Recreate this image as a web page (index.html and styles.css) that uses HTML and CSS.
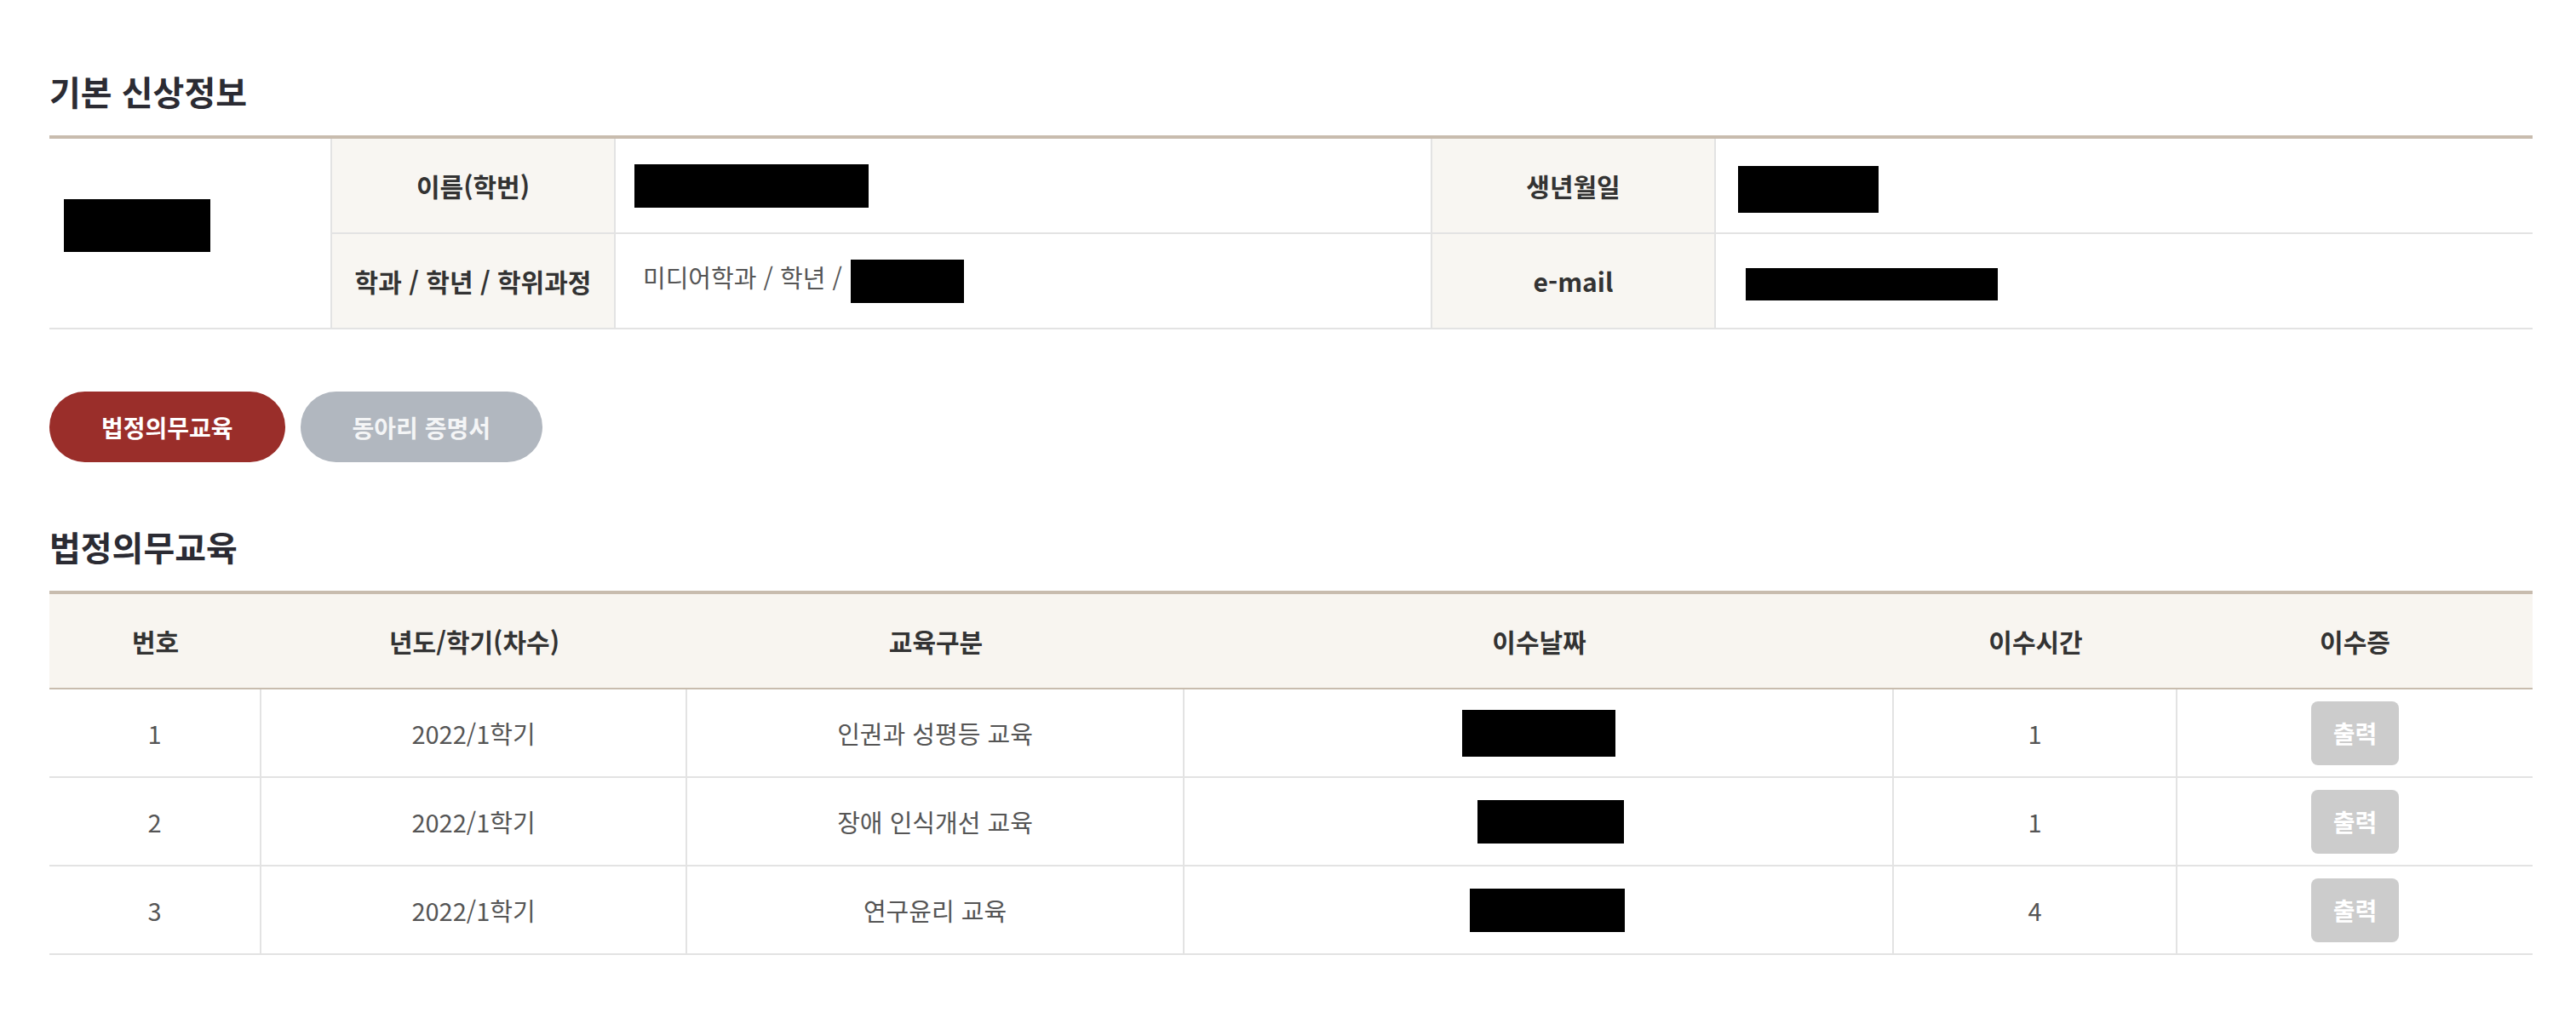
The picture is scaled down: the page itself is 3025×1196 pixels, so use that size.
FILE: index.html
```html
<!DOCTYPE html>
<html lang="ko">
<head>
    <meta charset="UTF-8">
    <meta name="viewport" content="width=device-width, initial-scale=1.0">
    <title>신상정보 - 법정의무교육</title>
    <link rel="stylesheet" href="styles.css">
</head>
<body>
    <div class="container">
        <!-- 기본 신상정보 -->
        <h2 class="section-title">기본 신상정보</h2>
        <table class="info-table">
            <colgroup>
                <col class="col-photo">
                <col class="col-label">
                <col class="col-value-wide">
                <col class="col-label">
                <col class="col-value">
            </colgroup>
            <tr>
                <td rowspan="2" class="photo"><span class="redact redact-photo"></span></td>
                <th>이름(학번)</th>
                <td class="name-cell"><span class="redact redact-name"></span></td>
                <th>생년월일</th>
                <td class="last"><span class="redact redact-birth"></span></td>
            </tr>
            <tr>
                <th>학과 / 학년 / 학위과정</th>
                <td>미디어학과 / 학년 / <span class="redact redact-course"></span></td>
                <th>e-mail</th>
                <td class="last"><span class="redact redact-email"></span></td>
            </tr>
        </table>

        <!-- Tabs -->
        <div class="tabs">
            <button type="button" class="tab active">법정의무교육</button>
            <button type="button" class="tab">동아리 증명서</button>
        </div>

        <!-- 법정의무교육 -->
        <h2 class="section-title">법정의무교육</h2>
        <table class="list-table">
            <colgroup>
                <col class="col-no">
                <col class="col-term">
                <col class="col-type">
                <col class="col-date">
                <col class="col-hours">
                <col class="col-cert">
            </colgroup>
            <thead>
                <tr>
                    <th>번호</th>
                    <th>년도/학기(차수)</th>
                    <th>교육구분</th>
                    <th>이수날짜</th>
                    <th>이수시간</th>
                    <th class="last">이수증</th>
                </tr>
            </thead>
            <tbody>
                <tr>
                    <td>1</td>
                    <td>2022/1학기</td>
                    <td>인권과 성평등 교육</td>
                    <td><span class="redact redact-date"></span></td>
                    <td>1</td>
                    <td class="last"><button type="button" class="btn-print">출력</button></td>
                </tr>
                <tr>
                    <td>2</td>
                    <td>2022/1학기</td>
                    <td>장애 인식개선 교육</td>
                    <td><span class="redact redact-date narrow"></span></td>
                    <td>1</td>
                    <td class="last"><button type="button" class="btn-print">출력</button></td>
                </tr>
                <tr>
                    <td>3</td>
                    <td>2022/1학기</td>
                    <td>연구윤리 교육</td>
                    <td><span class="redact redact-date shift"></span></td>
                    <td>4</td>
                    <td class="last"><button type="button" class="btn-print">출력</button></td>
                </tr>
            </tbody>
        </table>
    </div>
</body>
</html>
```

FILE: styles.css
```css
/* Basic Reset */
* {
    margin: 0;
    padding: 0;
    box-sizing: border-box;
}

body {
    font-family: 'Noto Sans CJK KR', 'Noto Sans', sans-serif;
    background-color: #fff;
    color: #333;
}

.container {
    width: 2916px;
    margin-left: 58px;
    padding-top: 82px;
    padding-bottom: 60px;
}

.section-title {
    font-size: 40px;
    line-height: 50px;
    font-weight: 700;
    color: #2b2b33;
    margin-bottom: 27px;
}

/* shared table look */
table {
    width: 100%;
    table-layout: fixed;
    border-collapse: separate;
    border-spacing: 0;
    border-top: 4px solid #c8bcae;
}

th, td {
    border-bottom: 2px solid #e3e3e3;
    border-right: 2px solid #e3e3e3;
    vertical-align: middle;
}

th.last, td.last {
    border-right: none;
}

.redact {
    display: inline-block;
    background-color: #000;
    vertical-align: middle;
}

/* 기본 신상정보 */
.col-photo { width: 332px; }
.col-label { width: 333px; }
.col-value-wide { width: 959px; }
.col-value { width: 959px; }

.info-table th,
.info-table td {
    height: 112px;
    font-size: 30px;
}

.info-table th {
    background-color: #f8f6f2;
    font-weight: 700;
    color: #333;
    text-align: center;
}

.info-table td {
    padding-left: 32px;
    font-size: 29px;
    color: #555;
}

.info-table td.photo {
    padding-left: 17px;
    padding-top: 0;
}

.info-table td.name-cell { padding-left: 22px; }
.info-table td.last { padding-left: 26px; }

.redact-photo { width: 172px; height: 62px; margin-bottom: 18px; }
.redact-name { width: 275px; height: 51px; }
.redact-birth { width: 165px; height: 55px; margin-top: 8px; }
.redact-email { width: 296px; height: 38px; margin-left: 9px; }
.redact-course { width: 133px; height: 51px; margin-left: 2px; }

/* Tabs */
.tabs {
    display: flex;
    gap: 18px;
    margin-top: 73px;
    margin-bottom: 74px;
}

.tab {
    height: 83px;
    padding: 0 61px;
    border: none;
    border-radius: 42px;
    background-color: #b1b7bf;
    color: #f4f5f6;
    font-family: inherit;
    font-size: 28px;
    font-weight: 700;
    cursor: pointer;
}

.tab.active {
    background-color: #9a2e2a;
    color: #fff;
}

/* 법정의무교육 목록 */
.col-no { width: 249px; }
.col-term { width: 500px; }
.col-type { width: 584px; }
.col-date { width: 833px; }
.col-hours { width: 333px; }
.col-cert { width: 417px; }

.list-table th,
.list-table td {
    text-align: center;
    font-size: 29px;
}

.list-table thead th {
    height: 112px;
    background-color: #f8f5f0;
    font-size: 30px;
    font-weight: 700;
    color: #333;
    border-right: none;
    border-bottom: 2px solid #c8bcae;
}

.list-table tbody td {
    height: 104px;
    color: #555;
}

.redact-date { width: 180px; height: 55px; }
.redact-date.narrow { width: 172px; height: 51px; margin-left: 28px; }
.redact-date.shift { width: 182px; height: 51px; margin-left: 20px; }

.btn-print {
    width: 103px;
    height: 75px;
    border: none;
    border-radius: 8px;
    background-color: #cccccc;
    color: #fff;
    font-family: inherit;
    font-size: 28px;
    font-weight: 700;
    vertical-align: middle;
}
```
